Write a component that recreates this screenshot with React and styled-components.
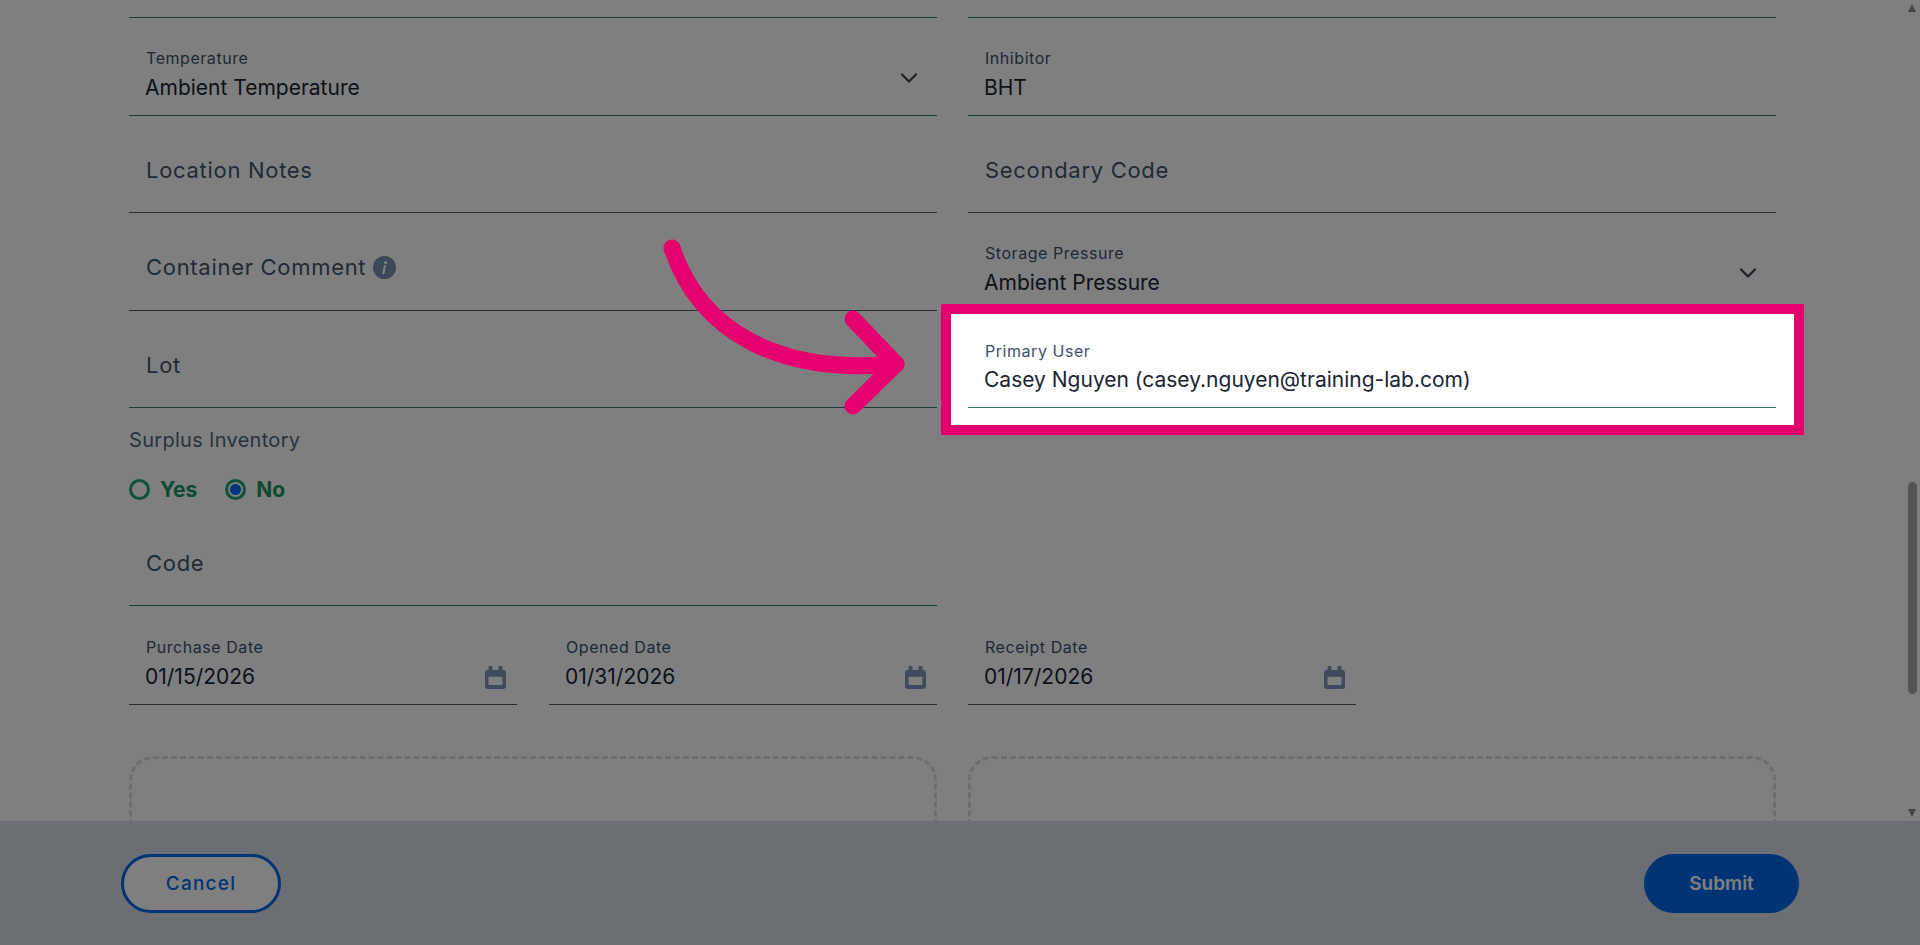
import React from 'react'
import styled, { createGlobalStyle } from 'styled-components'

const GlobalStyle = createGlobalStyle`
	html, body {
		margin: 0;
		height: 100%;
		overflow: hidden;
		background: #fff;
		font-family: Inter, 'Liberation Sans', sans-serif;
	}
	* {
		box-sizing: border-box;
	}
`

const Screen = styled.div`
	display: flex;
	flex-direction: column;
	height: 945px;
	position: relative;
	overflow: hidden;
`

const ScrollArea = styled.main`
	height: 821px;
	flex: none;
	position: relative;
	overflow: hidden;
	padding: 0 144px 0 129px;
`

const TwoColumns = styled.div`
	display: grid;
	grid-template-columns: 808px 808px;
	column-gap: 31px;
`

const ClippedLine = styled.div`
	height: 18px;
	border-bottom: 1px solid #2a8060;
`

const FieldBox = styled.div`
	display: flex;
	justify-content: space-between;
	height: ${(p) => p.$height || 97.5}px;
	padding: 0 19px 0 16px;
	border-bottom: 1px solid ${(p) => (p.$grey ? '#4a5a68' : '#2a8060')};
`

const FieldText = styled.div`
	display: flex;
	flex-direction: column;
	justify-content: flex-end;
	padding-bottom: ${(p) => (p.$empty ? 30.5 : 15)}px;
`

const SmallLabel = styled.label`
	font-size: 16px;
	line-height: 20px;
	letter-spacing: 0.55px;
	color: #3f4f6b;
	margin-bottom: ${(p) => p.$gap}px;
	padding-left: 1px;
`

const Value = styled.div`
	font-size: 21px;
	line-height: 24px;
	color: #1b2433;
`

const Placeholder = styled.div`
	display: flex;
	align-items: center;
	gap: 7px;
	padding-left: 1px;
	font-size: 22px;
	line-height: 24px;
	letter-spacing: 0.7px;
	color: #465468;
`

const Chevron = styled.svg`
	align-self: flex-end;
	width: 18px;
	height: 12px;
	margin-bottom: 31px;
	fill: none;
	stroke: #38414e;
	stroke-width: 2.2;
	stroke-linecap: round;
	stroke-linejoin: round;
`

const CalendarIcon = styled.svg`
	align-self: flex-end;
	width: 21px;
	height: 23px;
	margin: 0 -8px 15px 0;
	fill: #7f95b5;
	fill-rule: evenodd;
`

const InfoIcon = styled.svg`
	width: 23px;
	height: 23px;
`

const Field = ({ label, value, placeholder, info, chevron, calendar, grey, height, labelGap = 8 }) => (
	<FieldBox $grey={grey} $height={height}>
		<FieldText $empty={!!placeholder}>
			{label && <SmallLabel $gap={labelGap}>{label}</SmallLabel>}
			{value && <Value>{value}</Value>}
			{placeholder && (
				<Placeholder>
					{placeholder}
					{info && (
						<InfoIcon viewBox="0 0 23 23">
							<circle cx="11.5" cy="11.5" r="11.5" fill="#7a90b0" />
							<circle cx="12.6" cy="6.4" r="1.5" fill="#fff" />
							<path d="M11.8 10 10.4 17.2" stroke="#fff" strokeWidth="2.2" strokeLinecap="round" />
						</InfoIcon>
					)}
				</Placeholder>
			)}
		</FieldText>
		{chevron && (
			<Chevron viewBox="0 0 18 12">
				<path d="M2 2.5 9 9.5 16 2.5" />
			</Chevron>
		)}
		{calendar && (
			<CalendarIcon viewBox="0 0 21 23">
				<path d="M3.5 1.2a1.2 1.2 0 0 1 1.2-1.2h1.6a1.2 1.2 0 0 1 1.2 1.2V4h6V1.2A1.2 1.2 0 0 1 14.7 0h1.6a1.2 1.2 0 0 1 1.2 1.2V4H18a3 3 0 0 1 3 3v13a3 3 0 0 1-3 3H3a3 3 0 0 1-3-3V7a3 3 0 0 1 3-3h.5V1.2ZM4.5 10.7a1 1 0 0 0-1 1V18a1 1 0 0 0 1 1h12a1 1 0 0 0 1-1v-6.3a1 1 0 0 0-1-1h-12Z" />
			</CalendarIcon>
		)}
	</FieldBox>
)

const GroupLabel = styled.div`
	margin-top: 20px;
	font-size: 20px;
	line-height: 24px;
	letter-spacing: 0.3px;
	color: #55647a;
`

const RadioGroup = styled.div`
	display: flex;
	gap: 28px;
	margin-top: 25px;
	height: 24px;
`

const RadioOption = styled.div`
	display: flex;
	align-items: center;
	gap: 10px;
	font-size: 21px;
	font-weight: 700;
	color: #1b9468;
`

const RadioDot = styled.span`
	width: 21px;
	height: 21px;
	border-radius: 50%;
	border: 3px solid #1fa374;
	padding: 2px;
	&::after {
		content: '';
		display: ${(p) => (p.$checked ? 'block' : 'none')};
		width: 100%;
		height: 100%;
		border-radius: 50%;
		background: #0068f0;
	}
`

const DateRow = styled.div`
	display: grid;
	grid-template-columns: 388px 388px;
	column-gap: 32px;
`

const DropZone = styled.div`
	height: 200px;
	margin-top: 51px;
	border: 3px dashed #dcdcdc;
	border-radius: 24px;
`

const ScrollTrack = styled.div`
	position: absolute;
	top: 0;
	right: 0;
	bottom: 0;
	width: 17px;
`

const ScrollThumb = styled.div`
	position: absolute;
	top: 482px;
	left: 5px;
	width: 9px;
	height: 212px;
	border-radius: 5px;
	background: #a8a8a8;
`

const ScrollArrow = styled.div`
	position: absolute;
	left: 5px;
	${(p) => (p.$down ? 'bottom: 4px;' : 'top: 4px;')}
	border-left: 4.5px solid transparent;
	border-right: 4.5px solid transparent;
	${(p) => (p.$down ? 'border-top' : 'border-bottom')}: 8px solid #8c8c8c;
`

const Footer = styled.footer`
	flex: 1;
	display: flex;
	align-items: center;
	justify-content: space-between;
	padding: 0 121px;
	background: #d6dce6;
`

const Button = styled.button`
	height: 59px;
	width: ${(p) => (p.$primary ? 155 : 160)}px;
	border-radius: 30px;
	border: 3px solid #0068e8;
	background: ${(p) => (p.$primary ? '#0068e8' : '#fff')};
	color: ${(p) => (p.$primary ? '#fff' : '#0068e8')};
	font-family: inherit;
	font-size: 19px;
	font-weight: ${(p) => (p.$primary ? 600 : 500)};
	letter-spacing: ${(p) => (p.$primary ? 0 : 1.2)}px;
`

const Dim = styled.div`
	position: absolute;
	inset: 0;
	background: rgba(0, 0, 0, 0.5);
`

const Highlight = styled.div`
	position: absolute;
	left: 941px;
	top: 304px;
	width: 863px;
	height: 131px;
	padding: 0 18px 0 17px;
	background: #fff;
	border: 10px solid #e5006f;
`

const Arrow = styled.svg`
	position: absolute;
	left: 650px;
	top: 230px;
	width: 270px;
	height: 200px;
	fill: none;
	stroke: #e5006f;
	stroke-width: 17;
	stroke-linecap: round;
	stroke-linejoin: round;
`

const App = () => (
	<>
		<GlobalStyle />
		<Screen>
			<ScrollArea>
				<TwoColumns>
					<ClippedLine />
					<ClippedLine />
					<Field label="Temperature" value="Ambient Temperature" chevron />
					<Field label="Inhibitor" value="BHT" />
					<Field placeholder="Location Notes" grey />
					<Field placeholder="Secondary Code" grey />
					<Field placeholder="Container Comment" info grey />
					<Field label="Storage Pressure" value="Ambient Pressure" chevron />
					<Field placeholder="Lot" />
				</TwoColumns>
				<GroupLabel>Surplus Inventory</GroupLabel>
				<RadioGroup>
					<RadioOption>
						<RadioDot />
						Yes
					</RadioOption>
					<RadioOption>
						<RadioDot $checked />
						No
					</RadioOption>
				</RadioGroup>
				<TwoColumns>
					<Field placeholder="Code" height={105} />
				</TwoColumns>
				<TwoColumns>
					<DateRow>
						<Field label="Purchase Date" value="01/15/2026" calendar grey height={99} />
						<Field label="Opened Date" value="01/31/2026" calendar grey height={99} />
					</DateRow>
					<DateRow>
						<Field label="Receipt Date" value="01/17/2026" calendar grey height={99} />
					</DateRow>
				</TwoColumns>
				<TwoColumns>
					<DropZone />
					<DropZone />
				</TwoColumns>
				<ScrollTrack>
					<ScrollArrow />
					<ScrollThumb />
					<ScrollArrow $down />
				</ScrollTrack>
			</ScrollArea>
			<Footer>
				<Button>Cancel</Button>
				<Button $primary>Submit</Button>
			</Footer>
			<Dim />
			<Highlight>
				<Field label="Primary User" value="Casey Nguyen (casey.nguyen@training-lab.com)" height={94} labelGap={7} />
			</Highlight>
			<Arrow viewBox="0 0 270 200">
				<path d="M22 18C48 96 122 146 246 134" />
				<path d="M203 89 246 134 203 176" />
			</Arrow>
		</Screen>
	</>
)

export default App
